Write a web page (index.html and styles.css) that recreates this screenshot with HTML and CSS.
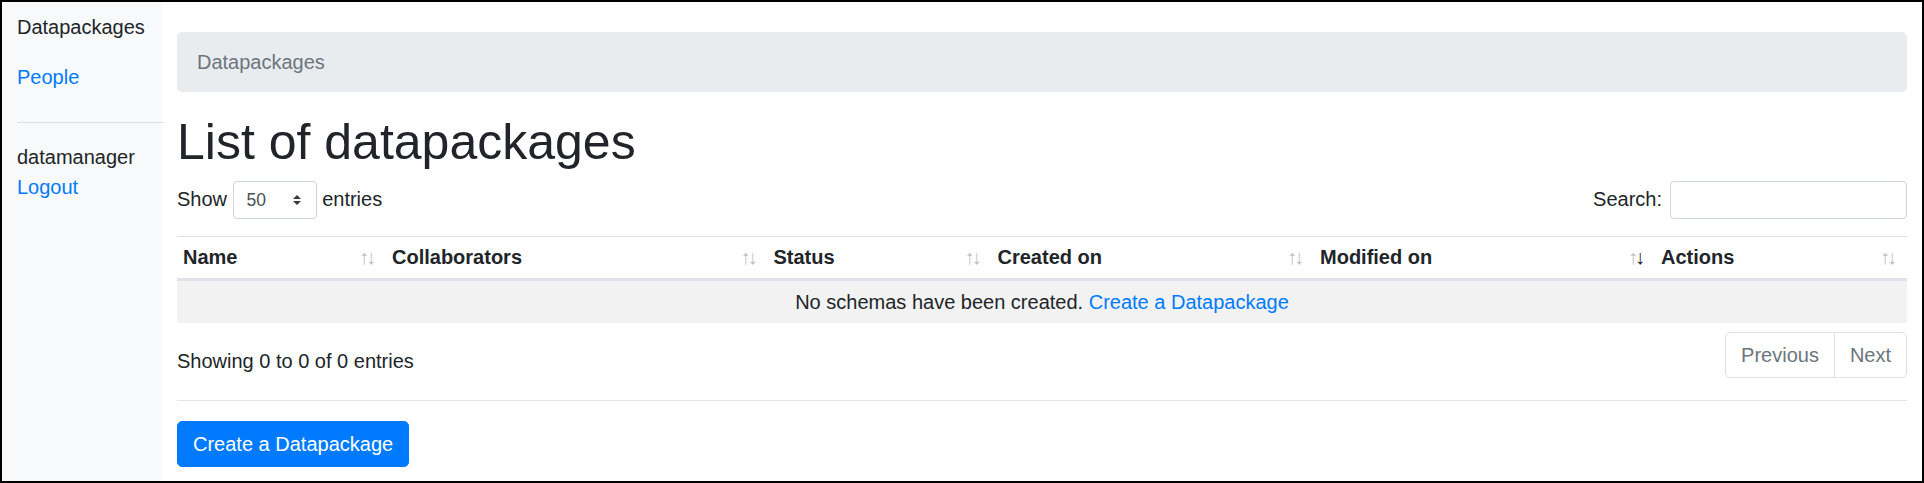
FILE: index.html
```html
<!DOCTYPE html>
<html lang="en">
<head>
<meta charset="utf-8">
<title>List of datapackages</title>
<link rel="stylesheet" href="styles.css">
</head>
<body>
<div class="frame">
  <nav class="sidebar">
    <ul class="side-nav">
      <li><span class="side-link active">Datapackages</span></li>
      <li><a class="side-link" href="#">People</a></li>
    </ul>
    <hr class="side-rule">
    <div class="user">
      <div>datamanager</div>
      <a href="#">Logout</a>
    </div>
  </nav>
  <main class="main">
    <ol class="breadcrumb"><li>Datapackages</li></ol>
    <h1 class="title">List of datapackages</h1>
    <div class="dt-top">
      <label class="dt-length">Show <span class="select-wrap"><select class="dt-select"><option>50</option></select><svg class="select-caret" viewBox="0 0 4 5" width="8" height="10"><path d="M2 0L0 2h4zm0 5L0 3h4z" fill="#343a40"/></svg></span> entries</label>
      <label class="dt-filter">Search:<input class="dt-search" type="search"></label>
    </div>
    <table class="dt">
      <thead>
        <tr>
          <th class="sorting c-name">Name</th>
          <th class="sorting c-collab">Collaborators</th>
          <th class="sorting c-status">Status</th>
          <th class="sorting c-created">Created on</th>
          <th class="sorting sorting-desc c-modified">Modified on</th>
          <th class="sorting c-actions">Actions</th>
        </tr>
      </thead>
      <tbody>
        <tr class="odd">
          <td class="empty" colspan="6">No schemas have been created. <a href="#">Create a Datapackage</a></td>
        </tr>
      </tbody>
    </table>
    <div class="dt-bottom">
      <div class="dt-info">Showing 0 to 0 of 0 entries</div>
      <ul class="pagination">
        <li class="page-item"><span class="page-link">Previous</span></li>
        <li class="page-item"><span class="page-link">Next</span></li>
      </ul>
    </div>
    <hr class="main-rule">
    <a class="btn-primary" href="#">Create a Datapackage</a>
  </main>
</div>
</body>
</html>
```
FILE: styles.css
```css
*, *::before, *::after { box-sizing: border-box; }

html, body {
  margin: 0;
  padding: 0;
}

body {
  font-family: "Liberation Sans", Arial, sans-serif;
  font-size: 20px;
  line-height: 30px;
  color: #212529;
  background: #fff;
}

a { color: #007bff; text-decoration: none; }

.frame {
  display: flex;
  height: 483px;
  border: 2px solid #000;
  overflow: hidden;
}

/* Sidebar */
.sidebar {
  width: 160px;
  flex: 0 0 160px;
  background: #f8f9fa;
}

.side-nav {
  list-style: none;
  margin: 0;
  padding: 0;
}

.side-link {
  display: block;
  padding: 10px 15px;
}

.side-link.active { color: #212529; }

.side-rule {
  width: 148px;
  margin: 20px 0 19px 15px;
  border: 0;
  border-top: 1px solid rgba(0, 0, 0, 0.1);
  height: 0;
  position: relative;
}

.user {
  padding: 0 15px;
}

.user a { display: block; }

/* Main */
.main {
  flex: 1;
  min-width: 0;
  padding: 30px 15px 0 15px;
}

.breadcrumb {
  list-style: none;
  margin: 0 0 20px 0;
  padding: 15px 20px;
  background: #e9ecef;
  border-radius: 5px;
  color: #6c757d;
}

.title {
  margin: 0 0 10px 0;
  font-size: 50px;
  font-weight: 500;
  line-height: 60px;
}

.dt-top {
  display: flex;
  justify-content: space-between;
  align-items: flex-start;
  margin-top: -1px;
}

.select-wrap {
  position: relative;
  display: inline-block;
}

.dt-select {
  -webkit-appearance: none;
  appearance: none;
  width: 84px;
  height: 38px;
  margin: 0;
  padding: 5px 35px 5px 13px;
  font-family: inherit;
  font-size: 17.5px;
  line-height: 26px;
  color: #495057;
  background: #fff;
  border: 1px solid #ced4da;
  border-radius: 4px;
  vertical-align: baseline;
}

.select-caret {
  position: absolute;
  right: 16px;
  top: 14px;
  pointer-events: none;
}

.dt-search {
  width: 237px;
  height: 38px;
  margin: 0 0 0 8px;
  padding: 5px 10px;
  font-family: inherit;
  font-size: 17.5px;
  line-height: 26px;
  color: #495057;
  background: #fff;
  border: 1px solid #ced4da;
  border-radius: 4px;
  vertical-align: baseline;
}

/* Table */
.dt {
  width: 100%;
  table-layout: fixed;
  border-collapse: separate;
  border-spacing: 0;
  margin: 17px 0 7px 0;
}

.dt th {
  position: relative;
  text-align: left;
  font-weight: 700;
  padding: 5px 25px 6px 6px;
  border-top: 1px solid #dee2e6;
  border-bottom: 2px solid #dee2e6;
  vertical-align: bottom;
}

.dt th.sorting::before,
.dt th.sorting::after {
  position: absolute;
  top: 5px;
  display: block;
  opacity: 0.3;
  font-weight: 400;
}

.dt th.sorting::before { content: "\2191"; right: 17px; }
.dt th.sorting::after { content: "\2193"; right: 10px; }
.dt th.sorting-desc::after { opacity: 1; }

.c-name { width: 209px; }
.c-collab { width: 381.5px; }
.c-status { width: 224px; }
.c-created { width: 322.5px; }
.c-modified { width: 341px; }
.c-actions { width: 252px; }

.dt td {
  padding: 6px;
  border-top: 1px solid #dee2e6;
}

.dt tbody tr.odd { background: #f2f2f2; }

.dt td.empty { text-align: center; }

.dt-bottom {
  display: flex;
  justify-content: space-between;
  align-items: flex-start;
}

.dt-info {
  padding-top: 16px;
  white-space: nowrap;
}

.pagination {
  display: flex;
  list-style: none;
  margin: 2px 0;
  padding: 0;
}

.page-link {
  display: block;
  padding: 10px 15px;
  line-height: 24px;
  color: #6c757d;
  background: #fff;
  border: 1px solid #dee2e6;
}

.page-item:first-child .page-link {
  border-radius: 5px 0 0 5px;
}

.page-item:last-child .page-link {
  margin-left: -1px;
  border-radius: 0 5px 5px 0;
}

.main-rule {
  margin: 20px 0;
  border: 0;
  border-top: 1px solid rgba(0, 0, 0, 0.1);
  height: 0;
}

.btn-primary {
  display: inline-block;
  padding: 7px 15px;
  line-height: 30px;
  color: #fff;
  background: #007bff;
  border: 1px solid #007bff;
  border-radius: 5px;
}
```
